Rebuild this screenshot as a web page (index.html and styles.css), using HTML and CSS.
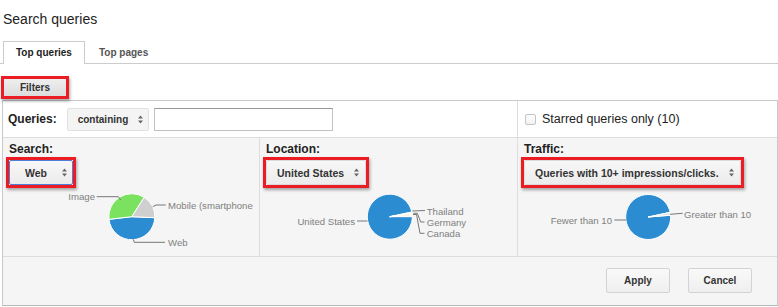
FILE: index.html
```html
<!DOCTYPE html>
<html lang="en">
<head>
    <meta charset="UTF-8">
    <meta name="viewport" content="width=device-width, initial-scale=1.0">
    <title>Search queries</title>
    <link rel="stylesheet" href="styles.css">
</head>
<body>

    <h1 class="page-title">Search queries</h1>

    <!-- Tabs -->
    <div class="tabs">
        <div class="tab active">Top queries</div>
        <div class="tab">Top pages</div>
    </div>

    <div class="filter-bar">
        <span class="mark"><button class="filter-button">Filters</button></span>
    </div>

    <div class="panel">
        <!-- Query row -->
        <div class="row-query">
            <div class="cell-query">
                <span class="field-label">Queries:</span>
                <span class="select select-small">containing
                    <svg class="updown" width="5" height="9" viewBox="0 0 5 9"><path d="M0 3.6L2.5 0.4L5 3.6Z M0 5.4L2.5 8.6L5 5.4Z"/></svg>
                </span>
                <input class="query-input" type="text">
            </div>
            <div class="cell-starred">
                <span class="checkbox"></span>
                <span>Starred queries only (10)</span>
            </div>
        </div>

        <!-- Charts row -->
        <div class="row-charts">
            <div class="chart-cell">
                <div class="chart-label">Search:</div>
                <span class="mark"><span class="select select-web">Web
                    <svg class="updown" width="5" height="9" viewBox="0 0 5 9"><path d="M0 3.6L2.5 0.4L5 3.6Z M0 5.4L2.5 8.6L5 5.4Z"/></svg>
                </span></span>
                <svg class="pie" width="256" height="64">
                    <path class="slice-blue" d="M128.8 27.7 L151.78 28.7 A23 23 0 0 1 105.95 30.34 Z"/>
                    <path class="slice-green" d="M128.8 27.7 L105.95 30.34 A23 23 0 0 1 141.16 8.3 Z"/>
                    <path class="slice-gray" d="M128.8 27.7 L141.16 8.3 A23 23 0 0 1 151.78 28.7 Z"/>
                    <polyline points="93.7,7.7 115.3,7.7 117.7,11"/>
                    <polyline points="149.7,17.7 153,16 162.7,16"/>
                    <polyline points="130.3,50.3 131.3,53.3 162,53.3"/>
                    <text x="92" y="11.2" text-anchor="end">Image</text>
                    <text x="165" y="19.5">Mobile (smartphone</text>
                    <text x="165" y="56.8">Web</text>
                </svg>
            </div>
            <div class="chart-cell">
                <div class="chart-label">Location:</div>
                <span class="mark"><span class="select">United States
                    <svg class="updown" width="5" height="9" viewBox="0 0 5 9"><path d="M0 3.6L2.5 0.4L5 3.6Z M0 5.4L2.5 8.6L5 5.4Z"/></svg>
                </span></span>
                <svg class="pie" width="252" height="64">
                    <path class="slice-blue" d="M129.8 27.7 L152.3 27.7 A22.5 22.5 0 1 1 151.81 23.02 Z"/>
                    <path class="slice-green" d="M129.8 27.7 L151.81 23.02 A22.5 22.5 0 0 1 152.02 24.18 Z"/>
                    <path class="slice-yellow" d="M129.8 27.7 L152.02 24.18 A22.5 22.5 0 0 1 152.18 25.35 Z"/>
                    <path class="slice-orange" d="M129.8 27.7 L152.18 25.35 A22.5 22.5 0 0 1 152.27 26.52 Z"/>
                    <polyline points="97,32 107.5,32"/>
                    <polyline points="152.3,22 165,21.5"/>
                    <polyline points="153.3,24.3 157.3,24.3 160.7,33 164.5,33"/>
                    <polyline points="153,25.5 156.5,25.5 160,44.3 164.5,44.3"/>
                    <text x="95" y="35.5" text-anchor="end">United States</text>
                    <text x="166.7" y="25.5">Thailand</text>
                    <text x="166.7" y="36.5">Germany</text>
                    <text x="166.7" y="47.8">Canada</text>
                </svg>
            </div>
            <div class="chart-cell">
                <div class="chart-label">Traffic:</div>
                <span class="mark"><span class="select">Queries with 10+ impressions/clicks.
                    <svg class="updown" width="5" height="9" viewBox="0 0 5 9"><path d="M0 3.6L2.5 0.4L5 3.6Z M0 5.4L2.5 8.6L5 5.4Z"/></svg>
                </span></span>
                <svg class="pie" width="252" height="64">
                    <path class="slice-blue" d="M130.2 28 L152.63 26.23 A22.5 22.5 0 1 1 152.21 23.32 Z"/>
                    <path class="slice-light" d="M130.2 28 L152.21 23.32 A22.5 22.5 0 0 1 152.63 26.23 Z"/>
                    <polyline points="96.3,31 108,31"/>
                    <polyline points="152,25.3 164.7,24.3"/>
                    <text x="94" y="34.5" text-anchor="end">Fewer than 10</text>
                    <text x="166" y="28.5">Greater than 10</text>
                </svg>
            </div>
        </div>

        <!-- Footer buttons -->
        <div class="panel-footer">
            <button class="btn">Apply</button>
            <button class="btn">Cancel</button>
        </div>
    </div>

</body>
</html>
```

FILE: styles.css
```css
/* Basic styling */
body {
    margin: 0;
    font-family: "Liberation Sans", Arial, sans-serif;
    color: #222;
    background: #fff;
    width: 778px;
}
.page-title {
    margin: 0;
    padding: 10px 0 0 3px;
    font-size: 14px;
    line-height: 18px;
    font-weight: normal;
    color: #222;
}

/* Tabs */
.tabs {
    display: flex;
    height: 22px;
    margin-top: 13px;
    padding-left: 3px;
    border-bottom: 1px solid #ccc;
}
.tab {
    height: 21px;
    line-height: 21px;
    padding: 0 12px;
    margin-right: 1px;
    font-size: 10px;
    font-weight: bold;
    color: #555;
    border: 1px solid transparent;
    border-bottom: none;
}
.tab.active {
    height: 22px;
    background: #fff;
    border-color: #ccc;
    color: #222;
}

/* Filters */
.filter-bar {
    display: flex;
    padding: 12px 0 1px 1px;
}
.mark {
    display: inline-flex;
    border: 3px solid #ec1c24;
    box-shadow: 1px 2px 3px rgba(0, 0, 0, 0.35);
}
.filter-button {
    width: 62px;
    height: 17px;
    padding: 0;
    border: none;
    background: linear-gradient(#efefef, #dcdcdc);
    font-family: "Liberation Sans", Arial, sans-serif;
    font-size: 10px;
    font-weight: bold;
    color: #333;
}

/* Panel */
.panel {
    width: 776px;
    margin-left: 2px;
    box-sizing: border-box;
    border: 1px solid #c9c9c9;
    border-bottom-color: #b8b8b8;
    background: #f5f5f5;
}
.row-query {
    display: grid;
    grid-template-columns: 515px 1fr;
    height: 37px;
    box-sizing: border-box;
    border-bottom: 1px solid #ddd;
    background: #fff;
}
.cell-query {
    display: flex;
    align-items: center;
    padding-left: 5px;
    border-right: 1px solid #ddd;
}
.field-label {
    font-size: 12px;
    font-weight: bold;
    margin-right: 10px;
}
.select {
    display: inline-flex;
    align-items: center;
    height: 25px;
    box-sizing: border-box;
    padding: 0 6px 0 10px;
    gap: 10px;
    border: 1px solid #dadada;
    border-radius: 2px;
    background: linear-gradient(#f7f7f7, #ececec);
    font-size: 10.5px;
    font-weight: bold;
    color: #333;
    white-space: nowrap;
}
.select-small {
    height: 23px;
    padding-right: 5px;
    font-size: 10px;
    background: #f4f4f4;
    border-color: #e0e0e0;
}
.select-web {
    padding: 0 5px 0 15px;
    gap: 15px;
    border-color: #4d7fd8;
}
.updown {
    fill: #666;
}
.query-input {
    width: 179px;
    height: 23px;
    box-sizing: border-box;
    margin-left: 5px;
    border: 1px solid #c2c2c2;
    border-top-color: #999;
    background: #fff;
}
.cell-starred {
    display: flex;
    align-items: center;
    gap: 6px;
    padding-left: 7px;
    font-size: 12.5px;
    color: #222;
}
.checkbox {
    width: 11px;
    height: 11px;
    box-sizing: border-box;
    border: 1px solid #c4c4c4;
    border-radius: 2px;
    background: linear-gradient(#fff, #f1f1f1);
}

/* Charts */
.row-charts {
    display: grid;
    grid-template-columns: 257px 258px 1fr;
    height: 119px;
    box-sizing: border-box;
    border-bottom: 1px solid #ddd;
}
.chart-cell {
    display: flex;
    flex-direction: column;
    align-items: flex-start;
    padding: 4px 6px 0;
    border-right: 1px solid #ddd;
    overflow: hidden;
}
.chart-cell:last-child {
    border-right: none;
}
.chart-label {
    height: 14px;
    line-height: 14px;
    font-size: 12px;
    font-weight: bold;
}
.chart-cell .mark {
    margin: 1px 0 0 -3px;
}
.pie {
    display: block;
    flex-shrink: 0;
    margin: 1px 0 0 -6px;
}
.pie path {
    stroke: #fff;
    stroke-width: 1;
}
.pie polyline {
    fill: none;
    stroke: #777;
    stroke-width: 1;
}
.pie text {
    font-family: "Liberation Sans", Arial, sans-serif;
    font-size: 9.6px;
    fill: #808080;
}
.slice-blue { fill: #2b8cd2; }
.slice-green { fill: #7ae25e; }
.slice-gray { fill: #cfcfcf; }
.slice-yellow { fill: #f3d34a; }
.slice-orange { fill: #f29b3a; }
.slice-light { fill: #e6e6e6; }

/* Footer */
.panel-footer {
    display: flex;
    justify-content: flex-end;
    gap: 18px;
    height: 48px;
    box-sizing: border-box;
    padding: 11px 25px 0 0;
}
.btn {
    min-width: 64px;
    height: 25px;
    padding: 0 14px;
    border: 1px solid #d3d3d3;
    border-radius: 2px;
    background: linear-gradient(#f9f9f9, #efefef);
    font-family: "Liberation Sans", Arial, sans-serif;
    font-size: 10px;
    font-weight: bold;
    color: #333;
}
```
